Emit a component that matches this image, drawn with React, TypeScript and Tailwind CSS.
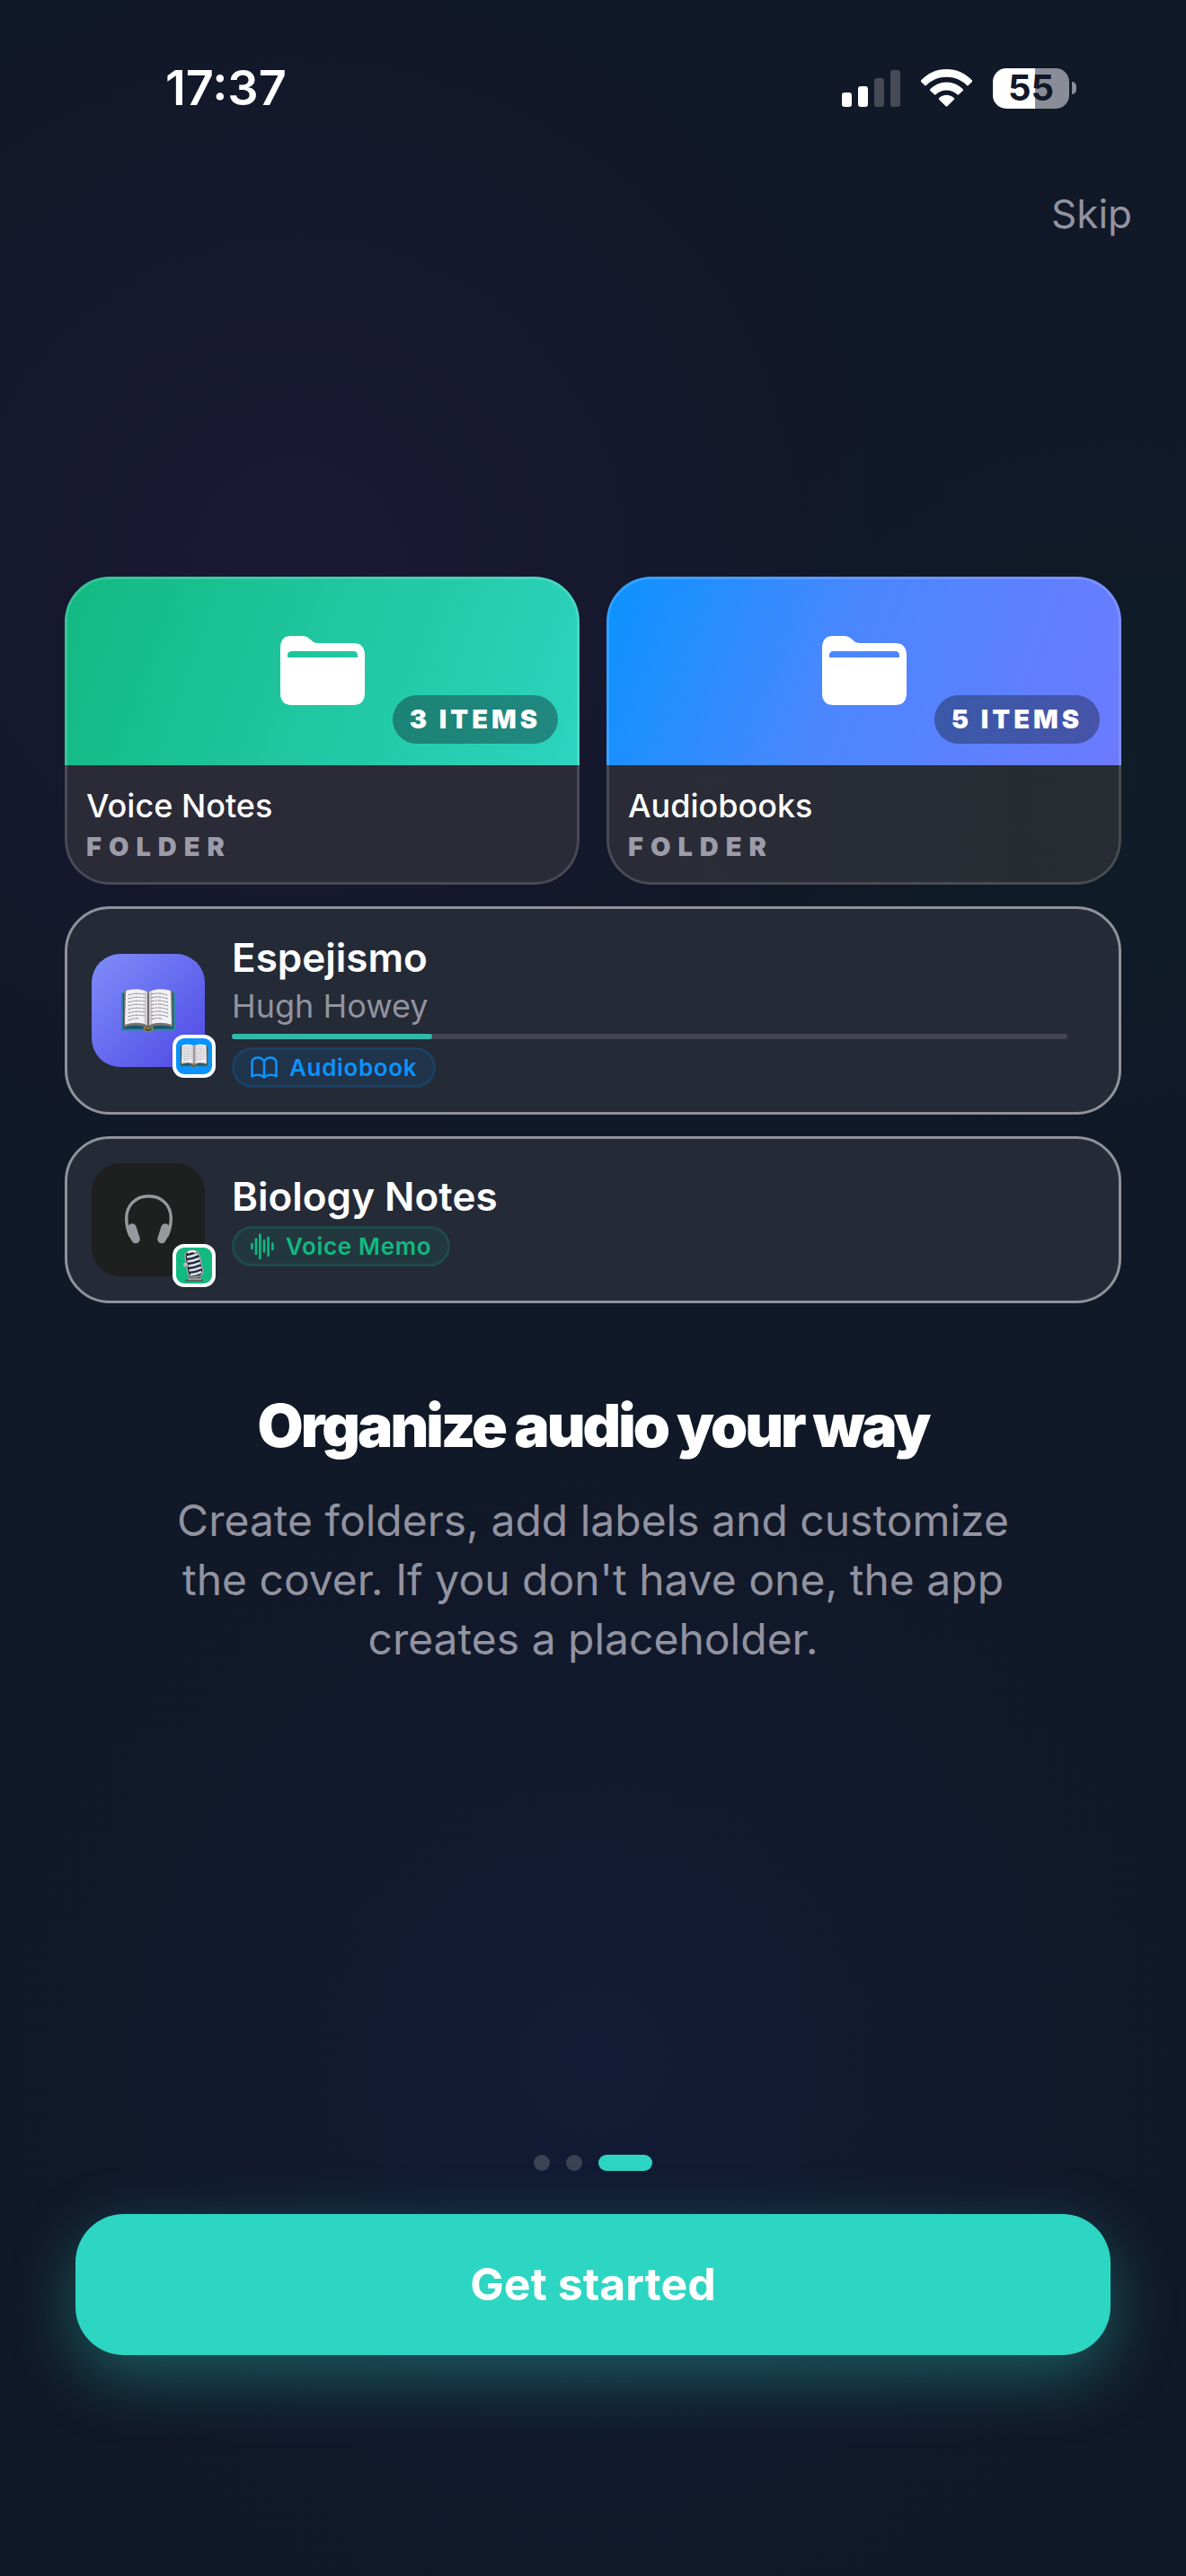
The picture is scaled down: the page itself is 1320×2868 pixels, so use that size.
import { useState, type ReactNode } from "react";

type Folder = {
  name: string;
  count: number;
  cover: string;
  body: string;
};

const FOLDERS: Folder[] = [
  {
    name: "Voice Notes",
    count: 3,
    cover: "bg-linear-[110deg,#12b981,#2dd4bf]",
    body: "bg-[#2b2a37]",
  },
  {
    name: "Audiobooks",
    count: 5,
    cover: "bg-linear-[110deg,#0a93ff,#4a87ff_45%,#6d7aff]",
    body: "bg-linear-90 from-[#2a2b37] to-[#272d33]",
  },
];

const STEPS = [0, 1, 2];

/** Last onboarding step: folders, labels and covers. */
export default function App() {
  const [step, setStep] = useState(2);

  return (
    <div className="flex min-h-screen flex-col bg-[#111827] bg-[radial-gradient(circle_at_25%_22%,#1b1836_0px,#1b183600_660px),radial-gradient(circle_at_94%_30%,#0f1d28_0px,#0f1d2800_480px),radial-gradient(circle_at_50%_80%,#131b36_0px,#131b3600_680px)] font-['Inter',sans-serif] text-white">
      <StatusBar />

      <header className="flex justify-end px-[60px] pt-[80px]">
        <button type="button" className="text-[44px] leading-[60px] text-[#9293a0]">
          Skip
        </button>
      </header>

      <main className="flex flex-1 flex-col justify-center px-[72px] pb-[168px]">
        <div className="grid grid-cols-2 gap-[30px]">
          {FOLDERS.map((f) => (
            <FolderCard key={f.name} folder={f} />
          ))}
        </div>

        <div className="mt-6 flex flex-col gap-6">
          <AudioRow
            title="Espejismo"
            author="Hugh Howey"
            progress={24}
            thumb={
              <div className="flex size-[126px] items-center justify-center rounded-[32px] bg-linear-135 from-[#818cf8] to-[#4f46e5]">
                <BookEmoji className="h-[50px] w-[60px]" />
              </div>
            }
            badge={
              <Badge className="bg-[#0a93ff]">
                <BookEmoji className="h-[27px] w-[32px]" />
              </Badge>
            }
            tag={
              <Tag className="border-[#1b4064] bg-[#20344b] text-[#0a93ff]">
                <BookIcon />
                Audiobook
              </Tag>
            }
          />
          <AudioRow
            title="Biology Notes"
            thumb={
              <div className="flex size-[126px] items-center justify-center rounded-[32px] bg-[#1e201f]">
                <HeadphonesIcon />
              </div>
            }
            badge={
              <Badge className="bg-[#12b981]">
                <MicEmoji />
              </Badge>
            }
            tag={
              <Tag className="border-[#1f4a4a] bg-[#22383e] text-[#12b981]">
                <WaveIcon />
                Voice Memo
              </Tag>
            }
          />
        </div>

        <h1 className="mt-[96px] text-center text-[66px] leading-[80px] font-black tracking-[-3px]">
          Organize audio your way
        </h1>
        <p className="mx-auto mt-[33px] max-w-[960px] text-center text-[48px] leading-[66px] text-[#9293a0]">
          Create folders, add labels and customize the cover. If you don't have one, the app
          creates a placeholder.
        </p>
      </main>

      <footer className="flex flex-col items-center px-[84px] pb-[246px]">
        <div className="flex gap-[18px]">
          {STEPS.map((s) => (
            <button
              key={s}
              type="button"
              aria-label={`Step ${s + 1}`}
              onClick={() => setStep(s)}
              className={
                s === step
                  ? "h-[18px] w-[60px] rounded-full bg-[#2dd6c2]"
                  : "size-[18px] rounded-full bg-[#3b4254]"
              }
            />
          ))}
        </div>
        <button
          type="button"
          className="mt-12 h-[157px] w-full rounded-[54px] bg-[#2dd6c2] text-[50px] font-bold shadow-[0_24px_72px_#2dd6c259]"
        >
          Get started
        </button>
      </footer>
    </div>
  );
}

function StatusBar() {
  return (
    <div className="flex items-center justify-between pt-[68px] pr-[122px] pl-[184px]">
      <div className="text-[54px] leading-[60px] font-semibold">17:37</div>
      <div className="flex items-center">
        <svg width="65" height="42" viewBox="0 0 65 42" fill="#fff" aria-hidden="true">
          <rect x="0" y="26" width="11" height="16" rx="3" />
          <rect x="18" y="19" width="11" height="23" rx="3" />
          <rect x="36" y="10" width="11" height="32" rx="3" opacity=".22" />
          <rect x="54" y="1" width="11" height="41" rx="3" opacity=".22" />
        </svg>
        <svg className="ml-[23px]" width="57" height="42" viewBox="0 0 57 42" fill="#fff" aria-hidden="true">
          <path d="M0 12.5C7.500 4.500 17.500 0 28.500 0S49.500 4.500 57 12.500Q57.500 13.200 57 14L52.500 18.200Q51.800 18.800 51 18C45 12 37 8.800 28.500 8.800S12 12 6 18Q5.200 18.800 4.500 18.200L0 14Q-.5 13.200 0 12.500Z" />
          <path d="M10.300 22.300C15.300 17.300 21.500 14.500 28.500 14.500S41.700 17.300 46.700 22.300Q47.400 23.100 46.700 23.900L42 28.300Q41.300 29 40.500 28.300C37.200 25.200 33 23.400 28.500 23.400S19.800 25.200 16.500 28.300Q15.700 29 15 28.300L10.300 23.900Q9.600 23.100 10.300 22.300Z" />
          <path d="M20 32.200C22.300 30 25.300 28.800 28.500 28.800S34.700 30 37 32.200Q37.600 33 37 33.700L29.400 41.300Q28.500 42.200 27.600 41.300L20 33.700Q19.400 33 20 32.200Z" />
        </svg>
        <div className="ml-[23px] flex h-[45px] w-[85px] items-center justify-center rounded-[15px] bg-linear-[90deg,#fff_55%,#8a8d97_55%] text-[40px] leading-none font-bold text-[#121828]">
          55
        </div>
        <div className="ml-[3px] h-[14px] w-[5px] rounded-r-full bg-[#8a8d97]" />
      </div>
    </div>
  );
}

function FolderCard({ folder }: { folder: Folder }) {
  return (
    <section className="relative overflow-hidden rounded-[50px] after:pointer-events-none after:absolute after:inset-0 after:rounded-[50px] after:border-3 after:border-white/15">
      <div className={`relative flex h-[210px] items-center justify-center ${folder.cover}`}>
        <svg width="94" height="77" viewBox="0 0 94 77" fill="#fff" aria-hidden="true">
          <path
            fillRule="evenodd"
            d="M0 13C0 4.500 4.500 0 12 0H23C28 0 30.500 1.300 33.500 4C37 7.200 38.500 8 43 8H81C89.500 8 94 12.500 94 21V64C94 72.500 89.500 77 81 77H13C4.500 77 0 72.500 0 64ZM8 24H86V22C86 18.500 84.500 17 81 17H13C9.500 17 8 18.500 8 22Z"
          />
        </svg>
        <div className="absolute right-6 bottom-6 rounded-full bg-[#111827]/40 px-[19px] text-[29px] leading-[54px] font-black tracking-[4px]">
          {folder.count} ITEMS
        </div>
      </div>
      <div className={`p-6 ${folder.body}`}>
        <h2 className="text-[36px] leading-[42px] font-medium">{folder.name}</h2>
        <div className="mt-[7px] text-[29px] leading-[36px] font-black tracking-[8px] text-[#9c9ca8]">
          FOLDER
        </div>
      </div>
    </section>
  );
}

function AudioRow({
  title,
  author,
  progress,
  thumb,
  badge,
  tag,
}: {
  title: string;
  author?: string;
  progress?: number;
  thumb: ReactNode;
  badge: ReactNode;
  tag: ReactNode;
}) {
  return (
    <section className="flex items-center gap-[30px] rounded-[50px] border-3 border-[#909299] bg-[#242a36] py-[27px] pr-[57px] pl-[27px]">
      <div className="relative">
        {thumb}
        <div className="absolute -right-3 -bottom-3">{badge}</div>
      </div>
      <div className="flex min-w-0 flex-1 flex-col items-start">
        <h2 className="text-[44px] leading-[54px] font-semibold">{title}</h2>
        {author && <div className="mt-[6px] text-[36px] leading-[42px] text-[#9293a0]">{author}</div>}
        {progress !== undefined && (
          <div className="mt-[10px] mb-[3px] h-[6px] w-full rounded-full bg-[#42454f]">
            <div className="h-full rounded-full bg-[#30b8a9]" style={{ width: `${progress}%` }} />
          </div>
        )}
        <div className="mt-[6px]">{tag}</div>
      </div>
    </section>
  );
}

function Badge({ className, children }: { className: string; children: ReactNode }) {
  return (
    <div
      className={`flex size-12 items-center justify-center rounded-[13px] border-4 border-white ${className}`}
    >
      {children}
    </div>
  );
}

function Tag({ className, children }: { className: string; children: ReactNode }) {
  return (
    <div
      className={`flex h-[45px] items-center gap-[13px] rounded-full border-3 px-[18px] text-[26px] font-semibold tracking-wide ${className}`}
    >
      {children}
    </div>
  );
}

function BookIcon() {
  return (
    <svg width="30" height="25" viewBox="0 0 30 25" fill="none" stroke="currentColor" strokeWidth="2.6" strokeLinecap="round" strokeLinejoin="round" aria-hidden="true">
      <path d="M1.500 22.500V6C2.500 2.800 5 1.500 8 1.500S13.500 2.800 15 6C16.500 2.800 19 1.500 22 1.500S27.500 2.800 28.500 6V22.500C27 21.300 25 20.800 22.500 20.800S17 21.500 15 23.500C13 21.500 10 20.800 7.500 20.800S3 21.300 1.500 22.500ZM15 6V23" />
    </svg>
  );
}

function WaveIcon() {
  return (
    <svg width="26" height="30" viewBox="0 0 26 30" stroke="currentColor" strokeWidth="2.600" strokeLinecap="round" aria-hidden="true">
      <path d="M1.400 12V17M6 6.500V23M10.400 1.500V28M15 8V20.500M19.600 5V25M24.400 11.500V18" />
    </svg>
  );
}

function HeadphonesIcon() {
  return (
    <svg width="53" height="55" viewBox="0 0 53 55" fill="none" stroke="#98989f" strokeLinecap="round" aria-hidden="true">
      <path strokeWidth="3.400" d="M6 46C3 39.500 1.700 33 1.700 26.500C1.700 12 12 1.700 26.500 1.700S51.300 12 51.300 26.500C51.300 33 50 39.500 47 46" />
      <path strokeWidth="9.500" d="M8 37L12 49.500M45 37L41 49.500" />
      <path strokeWidth="5" d="M5 37L9 49M48 37L44 49" />
    </svg>
  );
}

function BookEmoji({ className }: { className: string }) {
  return (
    <svg className={className} viewBox="0 0 60 50" aria-hidden="true">
      <path d="M0 5H60V47.500H35Q30 51 25 47.500H0Z" fill="#2c86a3" />
      <path d="M2 6H58V45.500H2Z" fill="#17566f" />
      <path d="M3 3.500V44C12 41 23 41 30 45C37 41 48 41 57 44V3.500Z" fill="#77716e" />
      <path d="M5 3C13 .5 23 0 30 5V42C23 38 13 38 4 41Z" fill="#f1f0f4" />
      <path d="M55 3C47 .5 37 0 30 5V42C37 38 47 38 56 41Z" fill="#f1f0f4" />
      <path d="M26 3Q29 4 30 6V42Q28 40 25.500 39.500ZM34 3Q31 4 30 6V42Q32 40 34.500 39.500Z" fill="#cfccd3" />
      <path d="M29.200 5H30.800V43H29.200Z" fill="#5b5553" />
      <path
        d="M7.500 8Q16 5 26 7M7.500 12Q16 9 26 11M7.500 16Q16 13 26 15M7.500 20Q16 17 26 19M7.500 24Q16 21 26 23M7.500 28Q16 25 26 27M7.500 32Q16 29 26 31M7.500 36Q15 33 20 34M33 7Q42 4.500 51 8M33 11Q42 8.500 52 12M33 15Q42 12.500 52 16M33 19Q42 16.500 52 20M33 23Q42 20.500 52 24M33 27Q42 24.500 52 28M33 31Q42 28.500 52 32M33 35Q40 32.500 46 34.500"
        fill="none"
        stroke="#87848c"
        strokeWidth="1"
        strokeDasharray="4 .8 2.500 .7"
      />
      <path d="M25 43.500Q30 48 35 43.500L34 47Q30 50 26 47Z" fill="#1d3942" stroke="#b99a2e" strokeWidth="1" />
    </svg>
  );
}

function MicEmoji() {
  return (
    <svg width="24" height="36" viewBox="0 0 24 36" aria-hidden="true">
      <path d="M6 27L18 25L19 32L22 34V35.500H2V34L7 32Z" fill="#5c585a" />
      <path d="M5 33H20" stroke="#c9c4c4" strokeWidth="1.200" />
      <path d="M2 8C2 3 6 1 10 1S16.500 2.500 18 7L22 24C22.500 28 19 30 14.500 30.500S6 30 5 26Z" fill="#242329" />
      <path
        d="M4 8.500Q10 8 16 5M4.500 13.500Q11 13 18 10M5.500 18.500Q12 18 19 15M6.500 23.500Q13 23 20 20M8 28Q14 28 20.500 25"
        fill="none"
        stroke="#d3def2"
        strokeWidth="2.600"
      />
      <path d="M2 8C2 3 6 1 10 1S16.500 2.500 18 7L22 24C22.500 28 19 30 14.500 30.500S6 30 5 26Z" fill="none" stroke="#a8a5ab" strokeWidth="1.300" />
      <path d="M5 4Q9 1 14 3" fill="none" stroke="#fff" strokeWidth="2" />
      <circle cx="2.500" cy="17" r="2.500" fill="#b9b6ba" />
    </svg>
  );
}
